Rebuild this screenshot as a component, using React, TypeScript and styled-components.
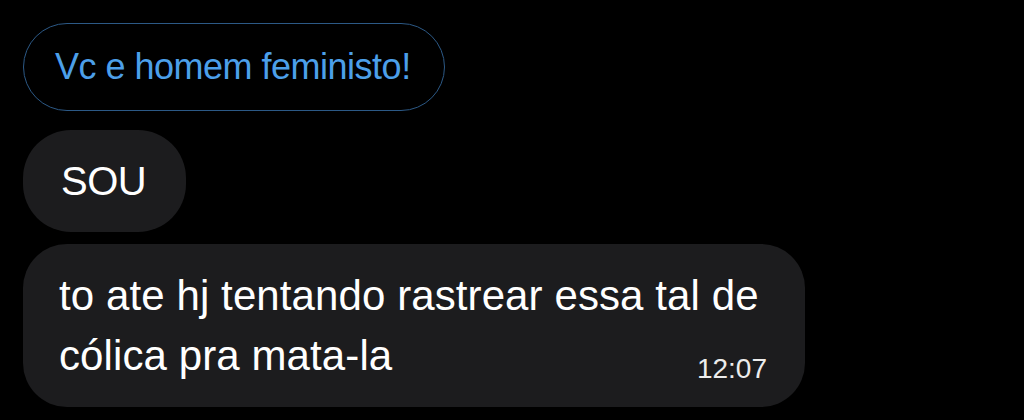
import React from "react";
import styled, { createGlobalStyle } from "styled-components";

const Global = createGlobalStyle`
  html, body { margin: 0; padding: 0; background: #000; }
  body { font-family: "Liberation Sans", Arial, sans-serif; -webkit-font-smoothing: antialiased; }
`;

const Screen = styled.div`
  width: 1024px;
  height: 420px;
  background: #000;
  box-sizing: border-box;
  padding: 23px 0 0 23px;
  display: flex;
  flex-direction: column;
  align-items: flex-start;
  overflow: hidden;
`;

const ReplyPill = styled.div`
  height: 88px;
  box-sizing: border-box;
  border: 1.5px solid #2c5986;
  border-radius: 44px;
  padding: 0 33px 0 31px;
  display: flex;
  align-items: center;
  color: #4c9fe9;
  font-size: 36px;
  letter-spacing: -0.5px;
  white-space: nowrap;
`;

const Bubble = styled.div<{ $mt: number }>`
  margin-top: ${(p) => p.$mt}px;
  background: #1c1c1e;
  color: #fff;
  box-sizing: border-box;
`;

const ShortBubble = styled(Bubble)`
  height: 102px;
  border-radius: 48px;
  padding: 0 40px 0 38px;
  display: flex;
  align-items: center;
  font-size: 40px;
  letter-spacing: -0.5px;
`;

const LongBubble = styled(Bubble)`
  width: 782px;
  border-radius: 44px;
  padding: 22px 38px 22px 36px;
  display: flex;
  flex-direction: column;
`;

const Body = styled.div`
  font-size: 42px;
  line-height: 60px;
  letter-spacing: 0.1px;
`;

const Time = styled.span`
  align-self: flex-end;
  margin-top: -33px;
  font-size: 28px;
  line-height: 32px;
  color: #ececec;
`;

export default function App() {
  return (
    <>
      <Global />
      <Screen>
        <ReplyPill>Vc e homem feministo!</ReplyPill>
        <ShortBubble $mt={19}>SOU</ShortBubble>
        <LongBubble $mt={12}>
          <Body>
            to ate hj tentando rastrear essa tal de
            <br />
            cólica pra mata-la
          </Body>
          <Time>12:07</Time>
        </LongBubble>
      </Screen>
    </>
  );
}
